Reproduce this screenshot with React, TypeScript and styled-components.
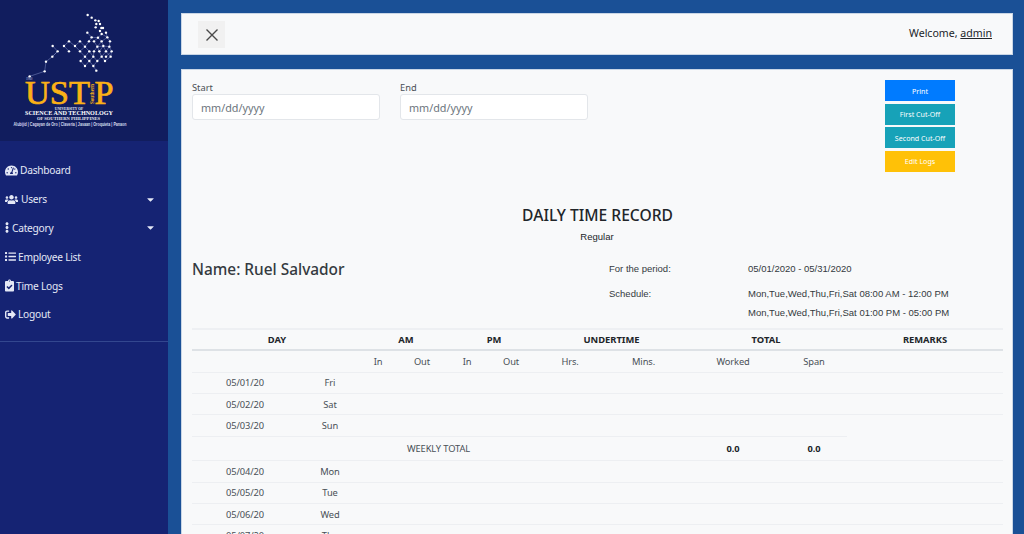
import React from "react";
import styled, { createGlobalStyle } from "styled-components";
import { FaTachometerAlt, FaUsers, FaEllipsisV, FaList, FaClipboardCheck, FaSignOutAlt, FaCaretDown } from "react-icons/fa";

const UI = `"Noto Sans", "Open Sans", sans-serif`;
const ARIAL = `"Liberation Sans", Arial, sans-serif`;

const Global = createGlobalStyle`
  html, body { margin: 0; padding: 0; height: 534px; overflow: hidden; background: #1a5096; }
  #root { height: 534px; }
  * { box-sizing: border-box; }
`;

const Shell = styled.div`
  display: flex; width: 1024px; height: 534px; overflow: hidden;
  background: #1a5096; font-family: ${UI}; color: #212529;
`;
const Sidebar = styled.aside`
  width: 168px; flex: none; background: #152373; color: #e4e8f6;
`;
const LogoBox = styled.div`
  height: 141px; background: #111d5e;
  svg { display: block; }
`;
const Nav = styled.nav`
  padding: 15px 0 12px; border-bottom: 1px solid #33478f;
`;
const NavItem = styled.div`
  display: flex; align-items: center; height: 28.8px; padding: 0 12px 0 5px;
  font-size: 10.2px; letter-spacing: -0.25px; gap: 2px;
  svg.main { flex: none; font-size: 13px; }
`;
const NavLabel = styled.span<{ $gap?: number }>`
  flex: 1; margin-left: ${p => p.$gap ?? 0}px;
`;
const Main = styled.main`
  flex: 1; min-width: 0; padding: 13px 11px 0 13px; display: flex; flex-direction: column; gap: 14px;
`;
const TopBar = styled.header`
  height: 42px; flex: none; background: #f8f9fa; border: 1px solid #c9d6e6;
  display: flex; align-items: center; justify-content: space-between; padding: 0 20px 0 16px;
`;
const CloseButton = styled.button`
  width: 27px; height: 27px; border: 0; padding: 0; margin-top: 1px; background: #f1f1f1; color: #444;
  display: flex; align-items: center; justify-content: center;
`;
const Welcome = styled.div`
  font-size: 10.6px; padding-bottom: 3px;
  a { color: #212529; text-decoration: underline; }
`;
const Card = styled.section`
  flex: 1; background: #f8f9fa; border-top: 1px solid #c9d6e6; border-left: 1px solid #c9d6e6; border-right: 1px solid #c9d6e6;
  padding: 10px 9px 0 10px; overflow: hidden;
`;
const TopRow = styled.div`
  display: flex; justify-content: space-between; height: 92px; padding-right: 48px;
`;
const Fields = styled.div`
  display: flex; gap: 20px;
`;
const Field = styled.label`
  display: block; width: 188px; font-size: 9.3px; color: #4a4f55; line-height: 13px; padding-top: 1px;
`;
const DateInput = styled.input`
  display: block; width: 188px; height: 26px; border: 1px solid #e3e6ea; border-radius: 3px;
  background: #fff; padding: 0 8px; font-family: ${UI}; font-size: 10.8px;
  &::placeholder { color: #6c757d; opacity: 1; }
`;
const Actions = styled.div`
  display: flex; flex-direction: column; gap: 2.4px; width: 70px;
`;
const Action = styled.button<{ $bg: string }>`
  height: 21.3px; border: 1px solid ${p => p.$bg}; background: ${p => p.$bg}; color: #fff;
  font-family: ${UI}; font-size: 7.1px; padding: 0;
`;
const Title = styled.h1`
  margin: 33px 0 0; text-align: center; font-size: 15.6px; line-height: 20px; font-weight: 500; color: #212529;
`;
const Subtitle = styled.div`
  font-family: ${ARIAL}; font-size: 9.5px; line-height: 12px; text-align: center; margin-top: 6px; color: #212529; padding-right: 1px;
`;
const InfoRow = styled.div`
  display: flex; margin-top: 16px; height: 69px;
`;
const Name = styled.h2`
  margin: 0; width: 417px; flex: none; font-size: 15.4px; line-height: 20px; padding-top: 1px; font-weight: 500; color: #343a40;
`;
const Info = styled.div`
  display: grid; grid-template-columns: 139px auto; grid-template-rows: 25px 19px 19px;
  font-family: ${ARIAL}; font-size: 9.5px; color: #343a40; align-content: start;
`;
const InfoCell = styled.div`
  line-height: 19px;
`;
const Table = styled.table`
  width: 811px; border-collapse: collapse; table-layout: fixed; font-size: 9.3px; letter-spacing: -0.1px; color: #495057;
  border-top: 2px solid #eef0f3;
`;
const Head = styled.th`
  height: 21px; padding: 0; text-align: center; font-size: 9.4px; letter-spacing: 0; font-weight: 700; color: #212529;
  border-bottom: 2px solid #dee2e6;
`;
const Cell = styled.td<{ $bold?: boolean; $noline?: boolean }>`
  height: 21.33px; padding: 0; text-align: center;
  border-top: ${p => (p.$noline ? "0" : "1px solid #edeff2")};
  font-weight: ${p => (p.$bold ? 700 : 400)};
  color: ${p => (p.$bold ? "#212529" : "#495057")};
`;
const SubHeadCell = styled(Cell)`
  height: 22.3px;
`;
const WeekCell = styled(Cell)`
  height: 24.6px;
`;

const columns = [106, 64, 32, 56, 34, 54, 64, 83, 96, 66, 156];
const subHeads = ["", "", "In", "Out", "In", "Out", "Hrs.", "Mins.", "Worked", "Span", ""];

type Row = [string, string] | "total";
const rows: Row[] = [
  ["05/01/20", "Fri"], ["05/02/20", "Sat"], ["05/03/20", "Sun"], "total",
  ["05/04/20", "Mon"], ["05/05/20", "Tue"], ["05/06/20", "Wed"], ["05/07/20", "Thu"],
];

const dots: [number, number][] = [
  [203,15],[215,23],[226,31],[236,33],[229,42],[240,42],[227,52],[244,54],[249,54],[240,63],[258,68],[245,72],[262,82],
  [202,68],[215,82],[234,83],[270,94],[245,94],[222,94],[207,94],[180,94],[147,94],[132,108],[113,124],[98,108],
  [97,140],[78,155],[74,184],[29,199],[165,108],[147,124],[180,124],[195,110],[208,124],[232,110],[222,124],[250,108],
  [258,124],[275,124],[272,140],[268,110],[238,124],[195,140],[220,140],[245,140],[258,140],[182,153],[208,153],
  [232,153],[255,153],[195,168],[220,168],[229,182],
];
const links: [number, number, number, number][] = [];
dots.forEach((a, i) => dots.slice(i + 1).forEach(b => {
  const d = Math.hypot(a[0] - b[0], a[1] - b[1]);
  if (d < 24 && d > 14 && a[0] !== b[0] && a[1] !== b[1] && Math.min(a[1], b[1]) > 66) links.push([a[0], a[1], b[0], b[1]]);
}));
const chain: [number, number][] = [[29,199],[74,184],[78,155],[97,140],[113,124]];

const Logo = () => (
  <svg width="168" height="141" viewBox="0 0 168 141" role="img" aria-label="USTP logo">
    <g transform="translate(20 10) scale(0.3333)">
      {links.map((l, i) => <line key={i} x1={l[0]} y1={l[1]} x2={l[2]} y2={l[3]} stroke="#7c89c0" strokeWidth="1.6" />)}
      {chain.slice(1).map((c, i) => <line key={i} x1={chain[i][0]} y1={chain[i][1]} x2={c[0]} y2={c[1]} stroke="#7c89c0" strokeWidth="1.6" />)}
      {dots.map((d, i) => <circle key={i} cx={d[0]} cy={d[1]} r="3.6" fill="#fff" />)}
    </g>
    <g fontFamily="'Liberation Serif', serif">
      <text x="25" y="104" fontSize="33" fill="#fbb116" stroke="#fbb116" strokeWidth="0.7" textLength="65" lengthAdjust="spacingAndGlyphs">UST</text>
      <text x="94.5" y="104" fontSize="33" fill="#fbb116" stroke="#fbb116" strokeWidth="0.7" textLength="19" lengthAdjust="spacingAndGlyphs">P</text>
      <text transform="translate(94 104) rotate(-90)" fontSize="5.5" fontWeight="700" fill="#fbb116" textLength="20" lengthAdjust="spacingAndGlyphs">Southern</text>
      <text x="26" y="80" fontSize="3.2" fill="#c6cbe0">1960</text>
      <text x="69" y="109.5" fontSize="3.6" fontWeight="700" fill="#e8eaf4" textAnchor="middle">UNIVERSITY OF</text>
      <text x="25" y="114.8" fontSize="5.2" fontWeight="700" fill="#fff" textLength="88" lengthAdjust="spacingAndGlyphs">SCIENCE AND TECHNOLOGY</text>
      <text x="37" y="119.5" fontSize="3.8" fontWeight="700" fill="#e8eaf4" textLength="63" lengthAdjust="spacingAndGlyphs">OF SOUTHERN PHILIPPINES</text>
    </g>
    <text x="13.5" y="126" fontFamily="'Liberation Sans', sans-serif" fontSize="4.6" fontWeight="700" fill="#d8dcef" textLength="113" lengthAdjust="spacingAndGlyphs">Alubijid | Cagayan de Oro | Claveria | Jasaan | Oroquieta | Panaon</text>
  </svg>
);

const Caret = styled(FaCaretDown)`
  font-size: 11px; flex: none;
`;

export default function App() {
  return (
    <Shell>
      <Global />
      <Sidebar>
        <LogoBox><Logo /></LogoBox>
        <Nav>
          <NavItem><FaTachometerAlt className="main" /><NavLabel>Dashboard</NavLabel></NavItem>
          <NavItem><FaUsers className="main" /><NavLabel $gap={1}>Users</NavLabel><Caret /></NavItem>
          <NavItem><FaEllipsisV className="main" style={{ width: 4 }} /><NavLabel $gap={1}>Category</NavLabel><Caret /></NavItem>
          <NavItem><FaList className="main" style={{ width: 11 }} /><NavLabel>Employee List</NavLabel></NavItem>
          <NavItem><FaClipboardCheck className="main" style={{ width: 9 }} /><NavLabel>Time Logs</NavLabel></NavItem>
          <NavItem><FaSignOutAlt className="main" style={{ width: 11 }} /><NavLabel>Logout</NavLabel></NavItem>
        </Nav>
      </Sidebar>
      <Main>
        <TopBar>
          <CloseButton aria-label="Close">
            <svg width="14" height="14" viewBox="0 0 14 14"><path d="M1.5 1.5 L12.5 12.5 M12.5 1.5 L1.5 12.5" stroke="#4a4a4a" strokeWidth="1.4" fill="none" /></svg>
          </CloseButton>
          <Welcome>Welcome, <a href="#">admin</a></Welcome>
        </TopBar>
        <Card>
          <TopRow>
            <Fields>
              <Field>Start<DateInput placeholder="mm/dd/yyyy" /></Field>
              <Field>End<DateInput placeholder="mm/dd/yyyy" /></Field>
            </Fields>
            <Actions>
              <Action $bg="#007bff">Print</Action>
              <Action $bg="#17a2b8">First Cut-Off</Action>
              <Action $bg="#17a2b8">Second Cut-Off</Action>
              <Action $bg="#ffc107">Edit Logs</Action>
            </Actions>
          </TopRow>
          <Title>DAILY TIME RECORD</Title>
          <Subtitle>Regular</Subtitle>
          <InfoRow>
            <Name>Name: Ruel Salvador</Name>
            <Info>
              <InfoCell>For the period:</InfoCell><InfoCell>05/01/2020 - 05/31/2020</InfoCell>
              <InfoCell>Schedule:</InfoCell><InfoCell>Mon,Tue,Wed,Thu,Fri,Sat 08:00 AM - 12:00 PM</InfoCell>
              <InfoCell /><InfoCell>Mon,Tue,Wed,Thu,Fri,Sat 01:00 PM - 05:00 PM</InfoCell>
            </Info>
          </InfoRow>
          <Table>
            <colgroup>{columns.map((w, i) => <col key={i} style={{ width: w }} />)}</colgroup>
            <thead>
              <tr>
                <Head colSpan={2}>DAY</Head>
                <Head colSpan={2}>AM</Head>
                <Head colSpan={2}>PM</Head>
                <Head colSpan={2}>UNDERTIME</Head>
                <Head colSpan={2}>TOTAL</Head>
                <Head>REMARKS</Head>
              </tr>
            </thead>
            <tbody>
              <tr>{subHeads.map((s, i) => <SubHeadCell key={i}>{s}</SubHeadCell>)}</tr>
              {rows.map((r, i) =>
                r === "total" ? (
                  <tr key={i}>
                    <WeekCell colSpan={8}>WEEKLY TOTAL</WeekCell>
                    <WeekCell $bold>0.0</WeekCell>
                    <WeekCell $bold>0.0</WeekCell>
                    <WeekCell $noline />
                  </tr>
                ) : (
                  <tr key={i}>
                    <Cell>{r[0]}</Cell>
                    <Cell>{r[1]}</Cell>
                    {Array.from({ length: 9 }, (_, k) => <Cell key={k} />)}
                  </tr>
                )
              )}
            </tbody>
          </Table>
        </Card>
      </Main>
    </Shell>
  );
}
